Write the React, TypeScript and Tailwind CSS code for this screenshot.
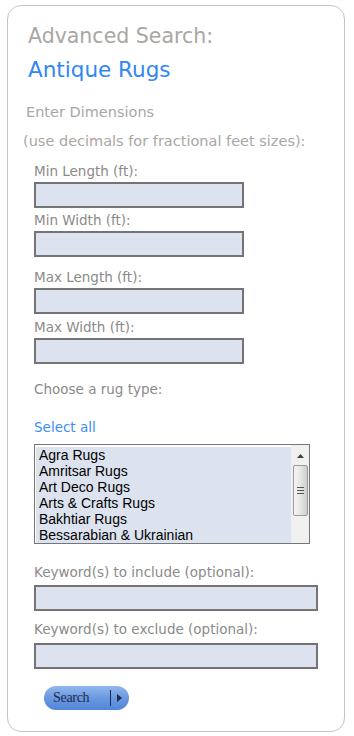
import React from 'react';

const rugTypes = [
    'Agra Rugs',
    'Amritsar Rugs',
    'Art Deco Rugs',
    'Arts & Crafts Rugs',
    'Bakhtiar Rugs',
    'Bessarabian & Ukrainian',
];

const Label: React.FC<{ children: React.ReactNode; className?: string }> = ({ children, className }) => (
    <div className={`text-[13.5px] leading-[16px] text-[#8c8a88] ${className ?? ''}`}>{children}</div>
);

const Box: React.FC<{ wide?: boolean; className?: string }> = ({ wide, className }) => (
    <div
        className={`h-[26px] border-2 border-[#747474] bg-[#dce3ef] ${wide ? 'w-[284px]' : 'w-[210px]'} ${className ?? ''}`}
    />
);

const App: React.FC = () => {
    return (
        <div className="w-[354px] h-[736px] bg-white pt-[5px] pl-[7px] font-['DejaVu_Sans',Verdana,sans-serif]">
            <div className="w-[338px] h-[727px] border border-[#c4c4c4] rounded-[14px] pt-[17px]">
                <div className="pl-[20px] text-[20.5px] leading-[26px] text-[#aaa6a2]">Advanced Search:</div>
                <div className="pl-[20px] mt-[8px] text-[21.5px] leading-[26px] text-[#2f86f6]">Antique Rugs</div>
                <div className="pl-[18px] mt-[20px] text-[14.5px] leading-[18px] text-[#aaa6a2]">Enter Dimensions</div>
                <div className="pl-[15px] mt-[11px] text-[14.5px] leading-[18px] text-[#aaa6a2]">(use decimals for fractional feet sizes):</div>

                <div className="pl-[26px]">
                    <Label className="mt-[13px]">Min Length (ft):</Label>
                    <Box className="mt-[3px]" />
                    <Label className="mt-[4px]">Min Width (ft):</Label>
                    <Box className="mt-[3px]" />
                    <Label className="mt-[12px]">Max Length (ft):</Label>
                    <Box className="mt-[3px]" />
                    <Label className="mt-[5px]">Max Width (ft):</Label>
                    <Box className="mt-[3px]" />

                    <Label className="mt-[17px]">Choose a rug type:</Label>
                    <div className="mt-[22px] text-[13.5px] leading-[16px] text-[#3a8ef6]">Select all</div>

                    <div className="mt-[9px] w-[276px] h-[100px] border border-[#767676] flex bg-white">
                        <div className="flex-1 bg-[#dce3ef] mt-[2px] ml-[1px] pl-[3px] text-[14px] leading-[16px] text-black overflow-hidden font-['Liberation_Sans',Arial,sans-serif]">
                            {rugTypes.map((r) => (
                                <div key={r} className="whitespace-nowrap">{r}</div>
                            ))}
                        </div>
                        <div className="w-[18px] bg-[#f0f0f0] flex flex-col items-center pt-[4px]">
                            <div className="h-[14px] flex items-center justify-center">
                                <svg width="7" height="4" viewBox="0 0 7 4">
                                    <path d="M3.5 0 L7 4 L0 4 Z" fill="#404040" />
                                </svg>
                            </div>
                            <div className="mt-[2px] w-[15px] h-[51px] rounded-[2px] border border-[#9a9a9a] bg-gradient-to-r from-[#f5f5f5] via-[#e6e6e6] to-[#cdcdcd] flex flex-col items-center justify-center gap-[2px]">
                                <div className="w-[7px] h-px bg-[#555]" />
                                <div className="w-[7px] h-px bg-[#555]" />
                                <div className="w-[7px] h-px bg-[#555]" />
                            </div>
                        </div>
                    </div>

                    <Label className="mt-[20px]">Keyword(s) to include (optional):</Label>
                    <Box wide className="mt-[5px]" />
                    <Label className="mt-[10px]">Keyword(s) to exclude (optional):</Label>
                    <Box wide className="mt-[6px]" />

                    <div className="mt-[17px] ml-[10px] w-[85px] h-[24px] rounded-full bg-gradient-to-b from-[#93b7ee] via-[#6b98e0] to-[#5086d8] flex items-center pl-[9px]">
                        <span className="text-[14px] leading-[16px] text-[#1b2c4e] tracking-[-0.3px] font-['Liberation_Serif','Times_New_Roman',serif]">
                            Search
                        </span>
                        <span className="ml-[21px] w-px h-[16px] bg-[#1b2c4e]" />
                        <svg className="ml-[6px]" width="5" height="8" viewBox="0 0 5 8">
                            <path d="M0 0 L5 4 L0 8 Z" fill="#1b2c4e" />
                        </svg>
                    </div>
                </div>
            </div>
        </div>
    );
};

export default App;
